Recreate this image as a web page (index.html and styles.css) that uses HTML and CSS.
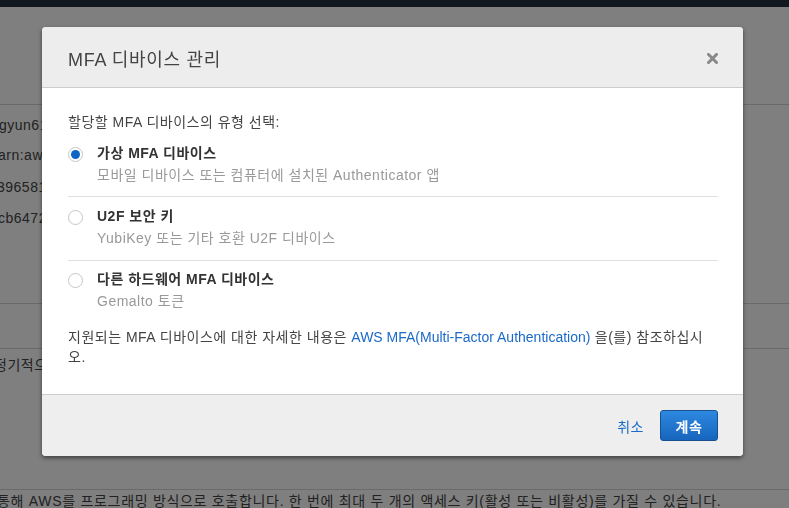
FILE: index.html
```html
<!DOCTYPE html>
<html lang="ko">
<head>
<meta charset="utf-8">
<title>MFA 디바이스 관리</title>
<link rel="stylesheet" href="styles.css">
</head>
<body>
<div class="page">
  <div class="topbar"></div>
  <div class="section top-section">
    <div class="bg-row r1">gyun61</div>
    <div class="bg-row r2">arn:aws:iam::</div>
    <div class="bg-row r3">396581</div>
    <div class="bg-row r4">cb6472</div>
  </div>
  <div class="section mid-section"></div>
  <div class="section row-section">
    <div class="bg-row r5">정기적으로</div>
  </div>
  <div class="section bottom-section">
    <div class="bg-row r6">통해 AWS를 프로그래밍 방식으로 호출합니다. 한 번에 최대 두 개의 액세스 키(활성 또는 비활성)를 가질 수 있습니다.</div>
  </div>
</div>

<div class="overlay"></div>

<div class="modal">
  <div class="modal-header">
    <h2 class="modal-title">MFA 디바이스 관리</h2>
    <svg class="close" width="11" height="11" viewBox="0 0 11 11" aria-label="닫기">
      <path d="M1.5 1.5 L9.5 9.5 M9.5 1.5 L1.5 9.5" stroke="#888" stroke-width="3" stroke-linecap="square" fill="none"/>
    </svg>
  </div>
  <div class="modal-body">
    <p class="intro">할당할 MFA 디바이스의 유형 선택:</p>
    <div class="option first">
      <span class="radio checked"></span>
      <div class="option-text">
        <div class="option-label">가상 MFA 디바이스</div>
        <div class="option-desc">모바일 디바이스 또는 컴퓨터에 설치된 Authenticator 앱</div>
      </div>
    </div>
    <div class="option">
      <span class="radio"></span>
      <div class="option-text">
        <div class="option-label">U2F 보안 키</div>
        <div class="option-desc">YubiKey 또는 기타 호환 U2F 디바이스</div>
      </div>
    </div>
    <div class="option last">
      <span class="radio"></span>
      <div class="option-text">
        <div class="option-label">다른 하드웨어 MFA 디바이스</div>
        <div class="option-desc">Gemalto 토큰</div>
      </div>
    </div>
    <p class="info">지원되는 MFA 디바이스에 대한 자세한 내용은 <a class="link" href="#">AWS MFA(Multi-Factor Authentication)</a> 을(를) 참조하십시오.</p>
  </div>
  <div class="modal-footer">
    <a class="cancel" href="#">취소</a>
    <button class="btn-primary">계속</button>
  </div>
</div>
</body>
</html>
```

FILE: styles.css
```css
html, body {
  margin: 0;
  padding: 0;
}
body {
  width: 789px;
  height: 508px;
  overflow: hidden;
  font-family: "Liberation Sans", Arial, "Noto Sans CJK KR", sans-serif;
  font-size: 14px;
  letter-spacing: 0.5px;
  color: #444;
  background: #fff;
}
.page {
  width: 789px;
  height: 508px;
  overflow: hidden;
  background: #fff;
}
.topbar {
  height: 7px;
  background: #232f3e;
}
.section {
  border-bottom: 1px solid #d5d5d5;
}
.top-section {
  height: 297px;
  padding-top: 106px;
  box-sizing: border-box;
  background-image: linear-gradient(#d5d5d5, #d5d5d5);
  background-repeat: no-repeat;
  background-size: 100% 1px;
  background-position: 0 97px;
}
.bg-row {
  white-space: nowrap;
  color: #444;
  line-height: 20px;
}
.r1 { margin-left: -1px; margin-top: 2px; }
.r2 { margin-left: -2px; margin-top: 10px; }
.r3 { margin-left: -3px; margin-top: 12px; }
.r4 { margin-left: -2px; margin-top: 11px; }
.mid-section {
  height: 44px;
}
.row-section {
  height: 141px;
  padding-top: 6px;
  box-sizing: border-box;
}
.r5 { margin-left: -6px; }
.bottom-section {
  border-bottom: none;
  padding-top: 1px;
}
.r6 { margin-left: -3px; letter-spacing: 0.7px; }

.overlay {
  position: fixed;
  inset: 0;
  background: rgba(0, 0, 0, 0.5);
}

.modal {
  position: absolute;
  left: 42px;
  top: 27px;
  width: 701px;
  background: #fff;
  border-radius: 4px;
  box-shadow: 0 2px 4px rgba(0, 0, 0, 0.5);
  overflow: hidden;
}
.modal-header {
  height: 60px;
  background: #ededed;
  border-bottom: 1px solid #ccc;
  display: flex;
  align-items: center;
  justify-content: space-between;
  padding: 0 25px 0 26px;
}
.modal-title {
  margin: 0;
  font-size: 18px;
  font-weight: normal;
  color: #444;
  padding-top: 1px;
  letter-spacing: 0.7px;
}
.close {
  display: block;
  margin-top: 2px;
}
.modal-body {
  padding: 24px 25px 27px 26px;
}
.intro {
  margin: 0;
  line-height: 20px;
}
.option {
  display: flex;
  align-items: flex-start;
  padding: 9px 0 12px;
  border-bottom: 1px solid #e1e1e1;
}
.option.first { padding-top: 11px; padding-bottom: 11px; }
.option.last { border-bottom: none; padding-bottom: 0; padding-top: 8px; }
.radio {
  flex: none;
  width: 13px;
  height: 13px;
  border: 1px solid #c6c6c6;
  border-radius: 50%;
  background: #fff;
  margin-top: 4px;
  margin-right: 14px;
  position: relative;
}
.radio.checked::after {
  content: "";
  position: absolute;
  left: 2px;
  top: 2px;
  width: 9px;
  height: 9px;
  border-radius: 50%;
  background: #0b64c6;
}
.option-label {
  font-weight: bold;
  color: #333;
  line-height: 20px;
}
.option-desc {
  color: #999;
  line-height: 20px;
  margin-top: 2px;
}
.info {
  margin: 16px 0 0;
  line-height: 20px;
}
.link {
  color: #1b6ac9;
  text-decoration: none;
  letter-spacing: 0;
}
.modal-footer {
  height: 62px;
  background: #eee;
  border-top: 1px solid #ccc;
  display: flex;
  align-items: center;
  justify-content: flex-end;
  gap: 16px;
  padding: 0 25px;
  box-sizing: border-box;
}
.cancel {
  color: #1b6ac9;
  text-decoration: none;
}
.btn-primary {
  width: 58px;
  height: 31px;
  border: 1px solid #1a4f8f;
  border-radius: 3px;
  background: linear-gradient(#2d88e0, #1765bd);
  color: #fff;
  font-family: inherit;
  font-size: 14px;
  font-weight: bold;
  letter-spacing: 0.5px;
  padding: 0;
}
```
